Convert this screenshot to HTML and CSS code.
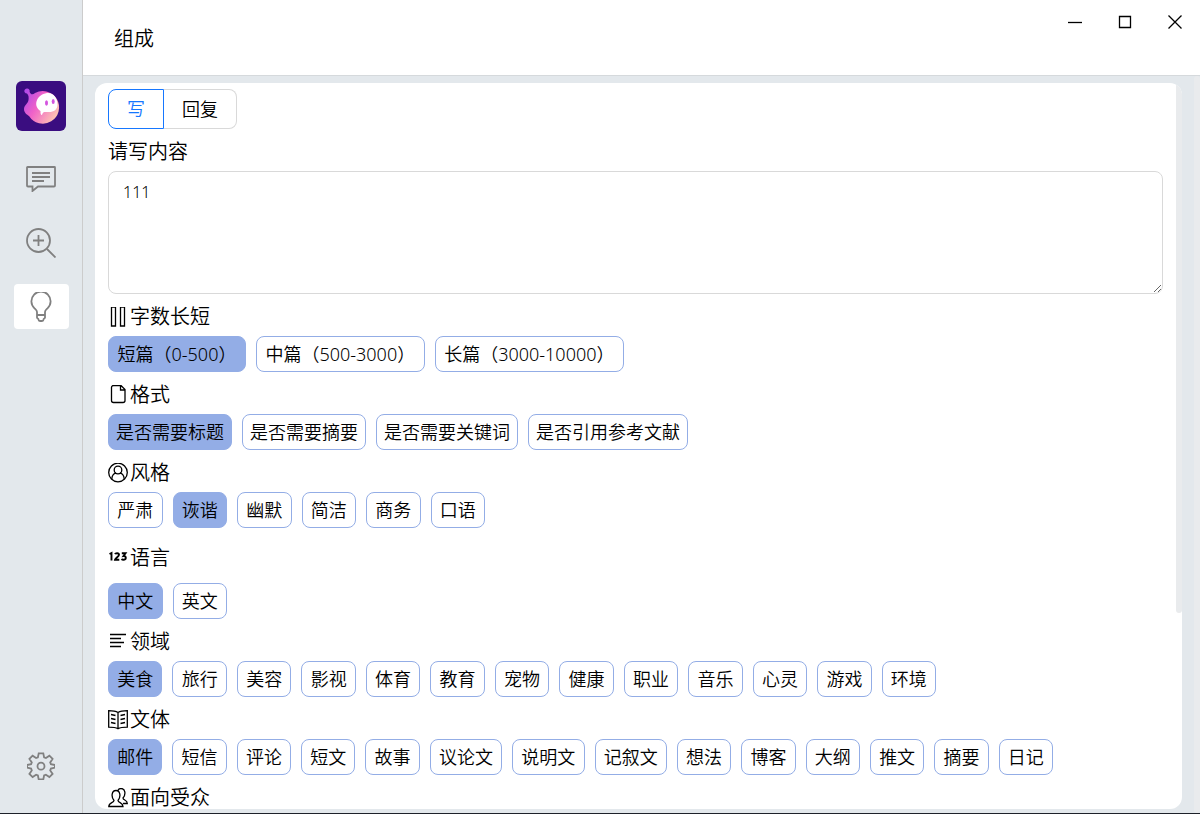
FILE: index.html
```html
<!DOCTYPE html>
<html lang="zh-CN">
<head>
    <meta charset="UTF-8">
    <meta name="viewport" content="width=device-width, initial-scale=1">
    <title>组成</title>
    <link rel="stylesheet" href="styles.css">
</head>
<body>
    <div class="app">
        <nav class="sidebar">
            <svg class="logo" viewBox="0 0 50 50">
                <defs>
                    <linearGradient id="body" x1="0" y1="0.2" x2="1" y2="0.8">
                        <stop offset="0" stop-color="#b44be8"/>
                        <stop offset="0.4" stop-color="#f062c8"/>
                        <stop offset="1" stop-color="#ffd0b0"/>
                    </linearGradient>
                </defs>
                <rect width="50" height="50" rx="6" fill="#3a0d80"/>
                <path d="M11 7.500a2.500 2.500 0 0 1 2.600 3.200c.6 2.500 3 3.600 5.400 1.300A16.300 16.300 0 1 1 13 35c-2-1.500-5-3-5-7 0-4 4-5 4.500-9 .3-2.500.3-4.500-1.500-6.500C7 12 8 7.500 11 7.500z" fill="url(#body)"/>
                <path d="M31 12c6-1 10.500 5 10.500 11.500 0 5-3.500 7.500-8.500 7.500h-4.500c-1 0-2 1-2.500 3-1.500 0-1.500-2-1.500-4-8-5-4-16.500 6.500-18z" fill="#fff"/>
                <ellipse cx="30.500" cy="22" rx="1.500" ry="2.700" fill="#d455df"/>
                <ellipse cx="37.200" cy="20.500" rx="1.500" ry="2.500" fill="#d455df"/>
            </svg>
            <button class="nav-btn" type="button" aria-label="聊天">
                <svg width="30" height="26" viewBox="0 0 30 26">
                    <path d="M1.500 1h27a.5.5 0 0 1 .5.500v18a1 1 0 0 1-1 1H12L6.500 25v-4.500H2a1 1 0 0 1-1-1v-18A.5.5 0 0 1 1.500 1z"/>
                    <path d="M6 7h18M6 11h18M6 15h12"/>
                </svg>
            </button>
            <button class="nav-btn" type="button" aria-label="搜索">
                <svg width="30" height="30" viewBox="0 0 30 30">
                    <circle cx="12.500" cy="12.500" r="11.500"/>
                    <path d="M21 21l8.500 8.500M7 12.500h11M12.500 7v11"/>
                </svg>
            </button>
            <button class="nav-btn active" type="button" aria-label="创作">
                <svg width="22" height="30" viewBox="0 0 22 30">
                    <path d="M7 23v-3c0-1.500-1-2.200-2.500-3.700a9.600 9.600 0 1 1 13 0C16 17.800 15 18.500 15 20v3zM7 23v2.500c0 1.200 1.500.8 1.500 2 0 1 .5 1.500 1.500 1.500h2c1 0 1.500-.5 1.500-1.500 0-1.200 1.500-.8 1.500-2V23"/>
                </svg>
            </button>
            <button class="nav-btn settings" type="button" aria-label="设置">
                <svg width="28" height="28" viewBox="0 0 28 28">
                    <path d="M11.700 1.300h4.600l.8 4.100 1.800.7 3.500-2.400 3.200 3.200-2.400 3.500.7 1.800 4 .8v2.600l-4 .9-.7 1.900 2.400 3.500-3.200 3.200-3.500-2.400-1.800.8-.8 3.900h-4.600l-.8-3.900-1.800-.8-3.500 2.400-3.200-3.200 2.400-3.500-.7-1.900-4-.9V13l4-.8.7-1.800-2.400-3.500 3.200-3.200 3.500 2.400 1.800-.7z"/>
                    <circle cx="14" cy="14.200" r="3.500"/>
                </svg>
            </button>
        </nav>

        <div class="page">
            <header class="titlebar">
                <h1>组成</h1>
                <div class="window-controls">
                    <button type="button" aria-label="最小化"><svg width="14" height="14" viewBox="0 0 14 14"><path d="M0 7.500h14"/></svg></button>
                    <button type="button" aria-label="最大化"><svg width="14" height="14" viewBox="0 0 14 14"><path d="M1.500 1.500h11v11h-11z"/></svg></button>
                    <button type="button" aria-label="关闭"><svg width="14" height="14" viewBox="0 0 14 14"><path d="M.5.500l13 13M13.500.500l-13 13"/></svg></button>
                </div>
            </header>

            <main class="content">
                <div class="panel">
                    <div class="tabs">
                        <label><input type="radio" name="mode" checked>写</label>
                        <label><input type="radio" name="mode">回复</label>
                    </div>

                    <label class="head" for="topic">请写内容</label>
                    <textarea id="topic">111</textarea>

                    <h2 class="head">
                        <svg viewBox="0 0 20 20"><path d="M3.500 0h4v19h-4zM12.500 0h4v19h-4z"/></svg>字数长短
                    </h2>
                    <div class="chips length">
                        <button type="button" class="on">短篇（0-500）</button>
                        <button type="button">中篇（500-3000）</button>
                        <button type="button">长篇（3000-10000）</button>
                    </div>

                    <h2 class="head">
                        <svg viewBox="0 0 20 20"><path d="M5.500.500H13l4 4v11a2 2 0 0 1-2 2H5.500a2 2 0 0 1-2-2v-13a2 2 0 0 1 2-2zM12.500.500V5H17"/></svg>格式
                    </h2>
                    <div class="chips format">
                        <button type="button" class="on">是否需要标题</button>
                        <button type="button">是否需要摘要</button>
                        <button type="button">是否需要关键词</button>
                        <button type="button">是否引用参考文献</button>
                    </div>

                    <h2 class="head">
                        <svg viewBox="0 0 20 20"><circle cx="10" cy="9.500" r="9.300"/><circle cx="10" cy="7" r="3.800"/><path d="M3.800 16c.3-3.500 2-5.500 4.200-5.800M16.200 16c-.3-3.500-2-5.500-4.200-5.800"/></svg>风格
                    </h2>
                    <div class="chips style">
                        <button type="button">严肃</button>
                        <button type="button" class="on">诙谐</button>
                        <button type="button">幽默</button>
                        <button type="button">简洁</button>
                        <button type="button">商务</button>
                        <button type="button">口语</button>
                    </div>

                    <h2 class="head tall">
                        <svg class="bold" viewBox="0 0 20 20"><path d="M1.500 6l2-1v7.500M7 6.200c.5-1.200 4-1.500 4 .6 0 1.700-3.500 3-4 5h4.300M13.800 5.300h3.700l-2 2.700c3.200-.3 3 4-.2 3.800-.8 0-1.300-.3-1.800-.8"/></svg>语言
                    </h2>
                    <div class="chips language">
                        <button type="button" class="on">中文</button>
                        <button type="button">英文</button>
                    </div>

                    <h2 class="head">
                        <svg viewBox="0 0 20 20"><path d="M2 2.500h16M2 6.500h11M2 10.500h14M2 14.500h11"/></svg>领域
                    </h2>
                    <div class="chips field">
                        <button type="button" class="on">美食</button>
                        <button type="button">旅行</button>
                        <button type="button">美容</button>
                        <button type="button">影视</button>
                        <button type="button">体育</button>
                        <button type="button">教育</button>
                        <button type="button">宠物</button>
                        <button type="button">健康</button>
                        <button type="button">职业</button>
                        <button type="button">音乐</button>
                        <button type="button">心灵</button>
                        <button type="button">游戏</button>
                        <button type="button">环境</button>
                    </div>

                    <h2 class="head">
                        <svg viewBox="0 0 20 20"><path d="M10 2.500C7.500 1 4 .7.700.7v16.500c3.300 0 6.800.2 9.300 1.500 2.500-1.300 6-1.500 9.300-1.500V.7C16 .7 12.500 1 10 2.500zM10 2.500v16M3 4.500l4.500 1M3 8.500l4.500 1M3 12.500l4.500 1M17 4.500l-4.500 1M17 8.500l-4.500 1M17 12.500l-4.500 1"/></svg>文体
                    </h2>
                    <div class="chips genre">
                        <button type="button" class="on">邮件</button>
                        <button type="button">短信</button>
                        <button type="button">评论</button>
                        <button type="button">短文</button>
                        <button type="button">故事</button>
                        <button type="button">议论文</button>
                        <button type="button">说明文</button>
                        <button type="button">记叙文</button>
                        <button type="button">想法</button>
                        <button type="button">博客</button>
                        <button type="button">大纲</button>
                        <button type="button">推文</button>
                        <button type="button">摘要</button>
                        <button type="button">日记</button>
                    </div>

                    <h2 class="head">
                        <svg viewBox="0 0 20 20"><path d="M6 12.500C3 9 3.500 2.500 8 2.500s5 6.500 2 10c.3 2.500 5 2 5 6H.8c0-4 4.900-3.500 5.200-6zM10 2c1-1.200 2-1.500 3-1.500 4.500 0 5 6 2 9.500 0 2.500 4.300 1.500 4.300 5.500H15"/></svg>面向受众
                    </h2>
                    <span class="thumb"></span>
                </div>
                <span class="page-thumb"></span>
            </main>
        </div>
    </div>
</body>
</html>
```
FILE: styles.css
```css
* {
    box-sizing: border-box;
}
body {
    margin: 0;
    font-family: "Noto Sans", "Noto Sans CJK SC", sans-serif;
    font-weight: 350;
    color: #000;
}
button {
    font: inherit;
    color: inherit;
    margin: 0;
    padding: 0;
    border: none;
    background: none;
    cursor: pointer;
}
svg {
    fill: none;
    stroke: currentColor;
    flex: none;
}
.app {
    display: flex;
    height: 100vh;
    border-bottom: 1px solid #1d2129;
    background-color: #e3e8ec;
}

/* sidebar */
.sidebar {
    display: flex;
    flex-direction: column;
    align-items: center;
    gap: 19px;
    flex: none;
    width: 83px;
    padding: 81px 0 25px;
    border-right: 1px solid #ccc;
}
.logo {
    width: 50px;
    height: 50px;
    margin-bottom: 6px;
    stroke: none;
}
.nav-btn {
    display: flex;
    align-items: center;
    justify-content: center;
    width: 55px;
    height: 45px;
    border-radius: 4px;
    color: #808080;
}
.nav-btn svg {
    stroke-width: 1.8;
}
.nav-btn.active {
    background-color: #fff;
}
.settings {
    margin-top: auto;
}

/* page */
.page {
    display: flex;
    flex-direction: column;
    flex: 1;
    min-width: 0;
}
.titlebar {
    display: flex;
    justify-content: space-between;
    flex: none;
    height: 76px;
    padding-left: 31px;
    background-color: #fff;
    border-bottom: 1px solid #d5d9dc;
}
h1 {
    margin: 0;
    font-size: 20px;
    font-weight: inherit;
    line-height: 78px;
}
.window-controls {
    display: flex;
}
.window-controls button {
    display: flex;
    align-items: center;
    justify-content: center;
    width: 50px;
    height: 44px;
}
.window-controls svg {
    stroke-width: 1.3;
}
.content {
    position: relative;
    flex: 1;
    min-height: 0;
    padding: 7px 18px 4px 12px;
}
.panel {
    position: relative;
    height: 100%;
    padding: 6px 19px 0 13px;
    overflow: hidden;
    background-color: #fff;
    border-radius: 12px;
}
.thumb, .page-thumb {
    position: absolute;
    top: 0;
    right: 0;
    width: 6px;
    border-radius: 3px;
    background-color: #e9ebed;
}
.thumb {
    height: 73%;
}
.page-thumb {
    height: 100%;
}

/* form */
.tabs {
    display: flex;
    height: 40px;
    font-size: 18px;
    line-height: 24px;
}
.tabs label {
    display: flex;
    align-items: center;
    padding: 0 18px;
    border: 1px solid #d9d9d9;
    cursor: pointer;
}
.tabs label:first-child {
    border-radius: 8px 0 0 8px;
}
.tabs label:last-child {
    border-left: none;
    border-radius: 0 8px 8px 0;
}
.tabs label:has(:checked) {
    color: #1677ff;
    border: 1px solid #1677ff;
}
.tabs input {
    appearance: none;
    width: 0;
    margin: 0;
}
.head {
    display: flex;
    align-items: center;
    gap: 2px;
    height: 42px;
    margin: 0;
    padding-top: 4px;
    font-size: 20px;
    font-weight: inherit;
    line-height: 20px;
}
.head svg {
    width: 20px;
    height: 20px;
    stroke-width: 1.3;
}
.head svg.bold {
    stroke-width: 1.9;
}
.head.tall {
    height: 55px;
}
textarea {
    display: block;
    width: 100%;
    height: 123px;
    padding: 8px 14px;
    border: 1px solid #d9d9d9;
    border-radius: 8px;
    outline: none;
    background-color: #fff;
    color: inherit;
    font: inherit;
    font-size: 16px;
    line-height: 24px;
    resize: vertical;
}
.chips {
    display: flex;
    flex-wrap: wrap;
    gap: 10px;
}
.chips button {
    flex: 1 0 auto;
    height: 36px;
    padding: 0 7px;
    border: 1px solid #93ade6;
    border-radius: 8px;
    font-size: 18px;
    line-height: 24px;
    white-space: nowrap;
}
.chips .on {
    background-color: #93ade6;
}
.length {
    max-width: 516px;
}
.format {
    max-width: 580px;
}
.style {
    max-width: 377px;
}
.language {
    max-width: 119px;
}
.field {
    max-width: 828px;
}
.genre {
    max-width: 945px;
}
```
